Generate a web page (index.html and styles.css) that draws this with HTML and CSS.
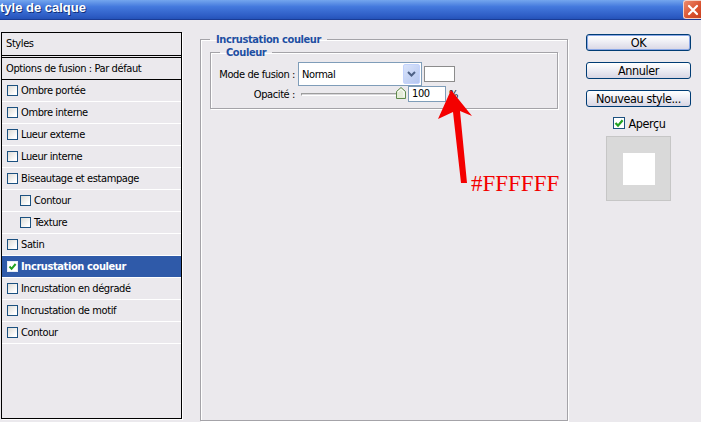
FILE: index.html
```html
<!DOCTYPE html>
<html>
<head>
<meta charset="UTF-8">
<title>Style de calque</title>
<link rel="stylesheet" href="styles.css">
</head>
<body>
	<div class="titlebar">
		<span class="title">tyle de calque</span>
		<span class="close-btn">
			<svg width="12" height="12" viewBox="0 0 12 12"><path d="M2 2 L10 10 M10 2 L2 10" stroke="#fff" stroke-width="2.2" stroke-linecap="round"/></svg>
		</span>
	</div>

	<div class="dialog">
		<!-- left list of effects -->
		<div class="styles-panel">
			<div class="panel-head">Styles</div>
			<div class="panel-opts">Options de fusion : Par défaut</div>
			<ul class="fx-list">
				<li class="fx"><span class="cb"></span>Ombre portée</li>
				<li class="fx"><span class="cb"></span>Ombre interne</li>
				<li class="fx"><span class="cb"></span>Lueur externe</li>
				<li class="fx"><span class="cb"></span>Lueur interne</li>
				<li class="fx"><span class="cb"></span>Biseautage et estampage</li>
				<li class="fx sub"><span class="cb"></span>Contour</li>
				<li class="fx sub"><span class="cb"></span>Texture</li>
				<li class="fx"><span class="cb"></span>Satin</li>
				<li class="fx selected"><span class="cb"><svg width="9" height="9" viewBox="0 0 9 9"><path d="M1.5 4.5 L3.6 6.8 L7.6 2" fill="none" stroke="#21a121" stroke-width="2"/></svg></span>Incrustation couleur</li>
				<li class="fx"><span class="cb"></span>Incrustation en dégradé</li>
				<li class="fx"><span class="cb"></span>Incrustation de motif</li>
				<li class="fx"><span class="cb"></span>Contour</li>
			</ul>
		</div>

		<!-- settings -->
		<fieldset class="group outer">
			<legend>Incrustation couleur</legend>
			<fieldset class="group inner">
				<legend>Couleur</legend>
				<div class="form-grid">
					<label class="lbl">Mode de fusion :</label>
					<div class="ctl">
						<div class="select">
							<span class="sel-text">Normal</span>
							<span class="drop">
								<svg width="9" height="6" viewBox="0 0 9 6"><path d="M1 1 L4.5 4.5 L8 1" fill="none" stroke="#4d6185" stroke-width="2"/></svg>
							</span>
						</div>
						<span class="swatch"></span>
					</div>
					<label class="lbl">Opacité :</label>
					<div class="ctl">
						<div class="slider">
							<span class="track"></span>
							<svg class="thumb" width="10" height="12" viewBox="0 0 10 12"><path d="M0.5 4.5 L5 0.5 L9.5 4.5 L9.5 11.5 L0.5 11.5 Z" fill="#e4ecd8" stroke="#5f8a4c"/><path d="M2 5 L5 2.3 L8 5 L8 10" fill="none" stroke="#fff"/></svg>
						</div>
						<span class="num">100</span>
						<span class="pct">%</span>
					</div>
				</div>
			</fieldset>
		</fieldset>

		<!-- buttons -->
		<div class="side">
			<div class="btn default">OK</div>
			<div class="btn">Annuler</div>
			<div class="btn">Nouveau style...</div>
			<div class="apercu"><span class="cb big"><svg width="10" height="10" viewBox="0 0 10 10"><path d="M1.5 5 L4 7.6 L8.6 2.2" fill="none" stroke="#21a121" stroke-width="2.2"/></svg></span>Aperçu</div>
			<div class="preview"><div class="preview-swatch"></div></div>
		</div>
	</div>

	<!-- red annotation drawn over the screenshot -->
	<svg class="annot-arrow" width="701" height="422" viewBox="0 0 701 422">
		<path d="M451 90 L438 119 L453 112 L461 183 L467 183 L460 111 L472 116 Z" fill="#f40000"/>
	</svg>
	<div class="annot-text">#FFFFFF</div>
</body>
</html>
```

FILE: styles.css
```css
body {
	margin: 0;
	background-color: #ebe9ed;
	font-family: "DejaVu Sans Condensed", "Liberation Sans", sans-serif;
	font-size: 11px;
	letter-spacing: -0.4px;
	color: #000;
	width: 701px;
	height: 422px;
	overflow: hidden;
	position: relative;
}

/* window title */
.titlebar {
	height: 19px;
	border-bottom: 1px solid #1a3c96;
	background: linear-gradient(#74a6ee, #4479dd 35%, #2d5cc4 85%, #2553b8);
	display: flex;
	align-items: flex-start;
}

.title {
	font-family: "Liberation Sans", sans-serif;
	font-weight: bold;
	font-size: 13px;
	letter-spacing: 0;
	color: #fff;
	line-height: 16px;
	text-shadow: 1px 1px 0 #10307a;
}

.close-btn {
	margin-left: auto;
	width: 17px;
	height: 17px;
	background: linear-gradient(135deg, #ec8a6c, #d9512f 60%, #c8401f);
	border: 1px solid #f4d2c6;
	border-right: none;
	border-radius: 3px 0 0 3px;
	display: flex;
	align-items: center;
	justify-content: center;
}

.dialog {
	display: flex;
	align-items: flex-start;
	padding: 12px 0 0 1px;
}

/* styles list */
.styles-panel {
	width: 179px;
	height: 385px;
	border: 1px solid #000;
	box-shadow: 1px 1px 0 #fff;
}

.panel-head {
	height: 22px;
	line-height: 22px;
	padding-left: 4px;
	border-bottom: 3px double #000;
}

.panel-opts {
	height: 21px;
	line-height: 21px;
	padding-left: 4px;
	border-bottom: 1px solid #000;
}

.fx-list {
	list-style: none;
	margin: 0;
	padding: 0;
}

.fx {
	height: 21px;
	border-bottom: 1px solid #fff;
	display: flex;
	align-items: center;
	padding-left: 5px;
}

.fx.sub {
	padding-left: 18px;
}

.fx.selected {
	background-color: #2f5aa9;
	color: #fff;
	font-weight: bold;
}

.cb {
	width: 11px;
	height: 11px;
	box-sizing: border-box;
	border: 1px solid #1c5180;
	background: linear-gradient(135deg, #dcdbd5, #fff 80%);
	margin-right: 3px;
	display: flex;
	align-items: center;
	justify-content: center;
	flex-shrink: 0;
}

.selected .cb {
	background: #fff;
	border-color: #e6ecf6;
}

.cb.big {
	width: 12px;
	height: 12px;
	background: #fff;
}

/* group boxes */
.group {
	margin: 0;
	border: 1px solid #a4a3a8;
	box-shadow: inset 1px 1px 0 #fff, 1px 1px 0 #fff;
	min-width: 0;
}

.group legend {
	color: #1e4fa2;
	font-weight: bold;
	line-height: 13px;
	padding: 0 6px;
}

.outer {
	margin: 1px 0 0 18px;
	width: 368px;
	height: 388px;
	box-sizing: border-box;
	padding: 0 9px;
}

.inner {
	height: 63px;
	box-sizing: border-box;
	padding: 0 7px 6px 7px;
}

.inner legend {
	margin-left: 2px;
}

.form-grid {
	display: grid;
	grid-template-columns: 78px auto;
	grid-template-rows: 24px 16px;
	column-gap: 2px;
	margin-top: 3px;
}

.lbl {
	text-align: right;
	padding-right: 1px;
	align-self: center;
}

.ctl {
	display: flex;
	align-items: center;
}

.select {
	width: 124px;
	height: 24px;
	box-sizing: border-box;
	border: 1px solid #7f9db9;
	background: #fff;
	display: flex;
	align-items: center;
}

.sel-text {
	padding-left: 3px;
	font-size: 11px;
}

.drop {
	margin-left: auto;
	margin-right: 1px;
	width: 17px;
	height: 20px;
	border: 1px solid #c3d3fd;
	border-radius: 2px;
	background: linear-gradient(135deg, #d9e3fb, #b5c7ef);
	box-sizing: border-box;
	display: flex;
	align-items: center;
	justify-content: center;
}

.swatch {
	margin-left: 2px;
	width: 31px;
	height: 16px;
	box-sizing: border-box;
	border: 1px solid #8c8c8c;
	background: #fff;
}

.slider {
	margin-left: 3px;
	display: flex;
	align-items: center;
}

.track {
	width: 96px;
	height: 3px;
	box-sizing: border-box;
	border-top: 1px solid #9d9d9d;
	border-left: 1px solid #9d9d9d;
	border-bottom: 1px solid #fff;
	border-right: 1px solid #fff;
	background: #d8d6da;
}

.thumb {
	margin-left: -1px;
	margin-top: -2px;
}

.num {
	margin-left: 2px;
	width: 38px;
	height: 16px;
	box-sizing: border-box;
	border: 1px solid #7f9db9;
	background: #fff;
	padding-left: 3px;
	line-height: 14px;
}

.pct {
	margin-left: 3px;
}

/* right column */
.side {
	margin: 2px 0 0 18px;
	width: 105px;
	display: flex;
	flex-direction: column;
	align-items: center;
}

.btn {
	width: 105px;
	height: 17px;
	box-sizing: border-box;
	border: 1px solid #003c74;
	border-radius: 3px;
	background: linear-gradient(#ffffff, #f0f0f6 40%, #d8d6e4);
	text-align: center;
	font-size: 12.5px;
	line-height: 15px;
	margin-bottom: 11px;
}

.btn.default {
	box-shadow: inset 0 0 0 1px #8aa7e6;
}

.apercu {
	display: flex;
	align-items: center;
	margin-top: -2px;
	font-size: 12.5px;
	height: 14px;
}

.apercu .cb {
	margin-right: 3px;
	margin-left: 2px;
}

.preview {
	margin-top: 6px;
	width: 65px;
	height: 65px;
	box-sizing: border-box;
	border: 1px solid #c6c6c6;
	background: #d9d9d9;
	display: flex;
	align-items: center;
	justify-content: center;
}

.preview-swatch {
	width: 32px;
	height: 32px;
	background: #fff;
}

/* annotation */
.annot-arrow {
	position: absolute;
	left: 0;
	top: 0;
	pointer-events: none;
}

.annot-text {
	position: absolute;
	left: 471px;
	top: 171px;
	font-family: "Liberation Serif", serif;
	font-size: 23px;
	letter-spacing: 0;
	color: #f40000;
}
```
